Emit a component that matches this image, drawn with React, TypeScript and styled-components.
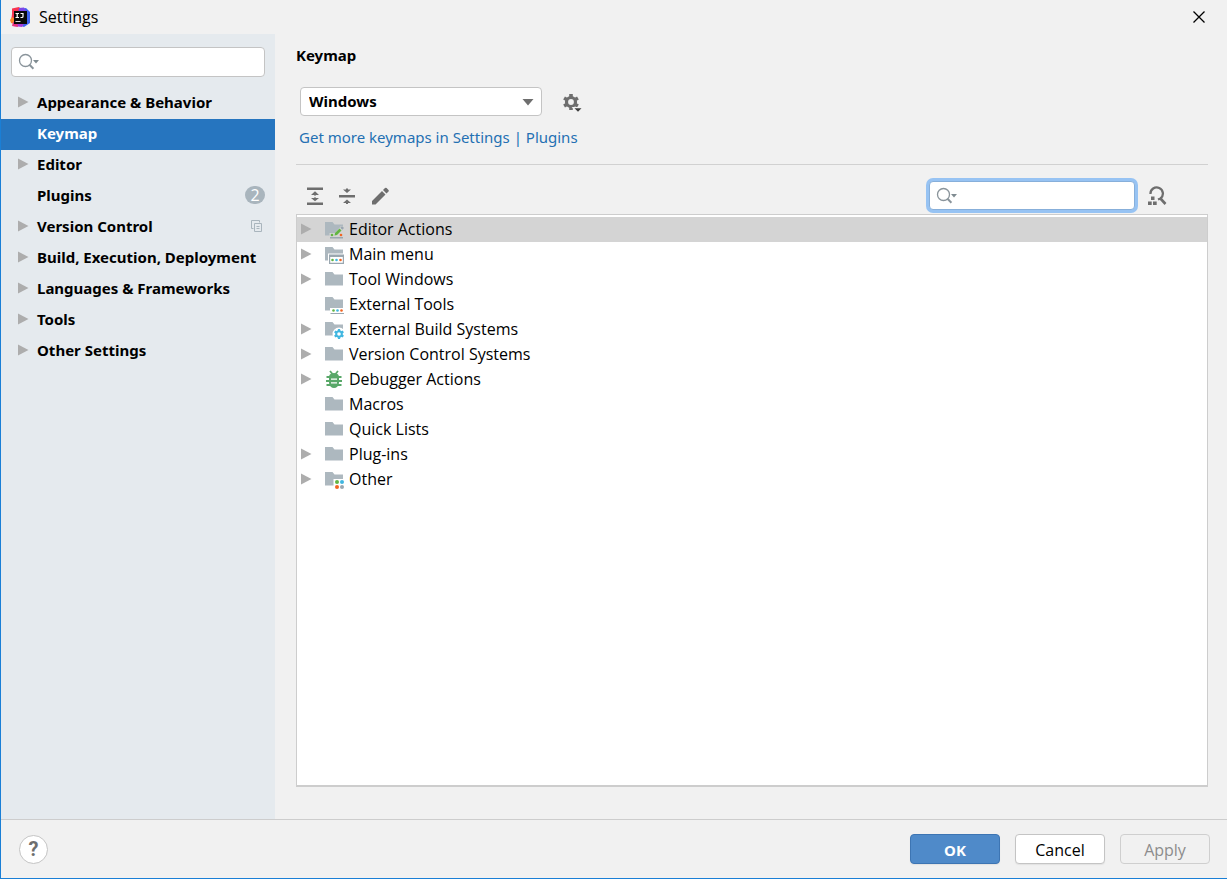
import React from "react";
import styled, { createGlobalStyle, css } from "styled-components";

const GlobalStyle = createGlobalStyle`
  *, *::before, *::after { box-sizing: border-box; }
  body {
    margin: 0;
    background: #f1f1f1;
    color: #000;
    font: 16px/24px "Open Sans", "Noto Sans", sans-serif;
  }
  button, input, select { font: inherit; color: inherit; }
  ul { list-style: none; margin: 0; padding: 0; }
  svg { display: block; flex: none; }
`;

const strongText = css`
  font: 700 15px/24px "Noto Sans", "Open Sans", sans-serif;
`;

const Dialog = styled.div`
  display: flex;
  flex-direction: column;
  min-height: 100vh;
  border: solid #1a7fd6;
  border-width: 0 0 1px 1px;
`;

const TitleBar = styled.header`
  display: flex;
  align-items: center;
  gap: 8px;
  height: 34px;
  padding: 0 21px 0 9px;
`;

const WindowTitle = styled.span`
  flex: 1;
`;

const IconButton = styled.button`
  display: flex;
  padding: 0;
  border: 0;
  background: none;
`;

const Body = styled.div`
  display: flex;
  flex: 1;
`;

const Sidebar = styled.aside`
  flex: none;
  width: 274px;
  padding-top: 13px;
  background: #e5eaee;
`;

const SearchField = styled.label<{ $focused?: boolean }>`
  display: flex;
  align-items: center;
  gap: 4px;
  height: 30px;
  padding: 0 6px;
  border: 1px solid #c4c4c4;
  border-radius: 4px;
  background: #fff;
  ${(p) =>
    p.$focused &&
    css`
      width: 206px;
      height: 29px;
      border-color: #87afda;
      box-shadow: 0 0 0 3px #97c3f3;
    `}
`;

const SearchInput = styled.input`
  flex: 1;
  min-width: 0;
  padding: 0;
  border: 0;
  outline: 0;
  background: none;
`;

const SidebarSearch = styled.div`
  padding: 0 10px 11px;
`;

const NavRow = styled.button<{ $selected?: boolean }>`
  ${strongText}
  display: flex;
  align-items: center;
  gap: 8px;
  width: 100%;
  height: 31px;
  padding: 0 10px 3px 16px;
  border: 0;
  background: ${(p) => (p.$selected ? "#2675bf" : "none")};
  color: ${(p) => (p.$selected ? "#fff" : "#000")};
  text-align: left;
  white-space: nowrap;
`;

const ArrowSlot = styled.span`
  flex: none;
  width: 12px;
`;

const NavLabel = styled.span`
  flex: 1;
`;

const Count = styled.span`
  width: 20px;
  height: 18px;
  border-radius: 9px;
  background: #a9b5bd;
  color: #fff;
  font: 400 16px/18px "Open Sans", sans-serif;
  text-align: center;
`;

const Content = styled.main`
  display: flex;
  flex: 1;
  flex-direction: column;
  min-width: 0;
  padding: 9px 19px 32px 21px;
`;

const Heading = styled.h1`
  ${strongText}
  margin: 0;
`;

const SchemeRow = styled.div`
  display: flex;
  align-items: center;
  gap: 20px;
  padding: 20px 4px 0;
`;

const SelectBox = styled.div`
  position: relative;
  width: 242px;
`;

const Select = styled.select`
  ${strongText}
  display: block;
  width: 100%;
  height: 29px;
  padding: 0 8px 1px;
  border: 1px solid #c4c4c4;
  border-radius: 4px;
  background: #fff;
  appearance: none;
`;

const SelectArrow = styled.svg`
  position: absolute;
  top: 11px;
  right: 8px;
  pointer-events: none;
`;

const PluginsLink = styled.a`
  align-self: flex-start;
  margin: 9px 3px 15px;
  color: #2470b3;
  font: 15px/24px "Noto Sans", "Open Sans", sans-serif;
  text-decoration: none;
`;

const Toolbar = styled.div`
  display: flex;
  align-items: center;
  gap: 12px;
  height: 50px;
  padding: 12px 41px 0 9px;
  border-top: 1px solid #d1d1d1;
`;

const Spacer = styled.span`
  flex: 1;
`;

const Tree = styled.ul`
  flex: 1;
  border: 1px solid #cdcdcd;
  border-bottom-width: 2px;
  background: #fff;

  && {
    padding: 2px 0;
  }
`;

const TreeRow = styled.button<{ $selected?: boolean }>`
  display: flex;
  align-items: center;
  gap: 5px;
  width: 100%;
  height: 25px;
  padding: 0 3px 2px;
  border: 0;
  background: ${(p) => (p.$selected ? "#d4d4d4" : "none")};
  text-align: left;
`;

const TreeArrow = styled(ArrowSlot)`
  width: 19px;
`;

const Footer = styled.footer`
  display: flex;
  align-items: center;
  gap: 15px;
  height: 59px;
  padding: 0 17px 0 18px;
  border-top: 1px solid #cdcdcd;
`;

const HelpButton = styled.button`
  width: 29px;
  height: 29px;
  padding: 0;
  border: 1px solid #c4c4c4;
  border-radius: 50%;
  background: #fff;
  color: #6e6e6e;
  font: 700 20px/26px Roboto, sans-serif;
`;

const DialogButton = styled.button<{ $primary?: boolean }>`
  width: 90px;
  height: 30px;
  padding: 2px 0 0;
  border: 1px solid ${(p) => (p.$primary ? "#3d75b3" : "#c4c4c4")};
  border-radius: 4px;
  background: ${(p) => (p.$primary ? "#4f8ac9" : "#fff")};
  box-shadow: 0 1px 1px #e2e2e2;
  color: ${(p) => (p.$primary ? "#fff" : "#000")};
  ${(p) => p.$primary && strongText}
  &:disabled {
    border-color: #cfcfcf;
    background: #f1f1f1;
    box-shadow: none;
    color: #8c8c8c;
  }
`;

const Logo = () => (
  <svg width="21" height="21" viewBox="0 0 21 21">
    <path d="M2 1.500 9 0 12 3 8 17 2 15 1.500 11 2 7Z" fill="#f9344f" />
    <path d="M0 13 2 10 5 12 5 17 1 16Z" fill="#fb8a2b" />
    <path d="M11 2 16 1 20 5 20 16 14 20 9 18Z" fill="#3d62ee" />
    <path d="M9 1 14 .5 17 5 8 6Z" fill="#7c46e8" />
    <path d="M3 15H15L12 20 3 19Z" fill="#a43bd8" />
    <path d="M3 15H7L8 20 2 19Z" fill="#e8347f" />
    <path d="M4 4H17V17H4Z" fill="#090909" />
    <path d="M5.500 6.500H9M7.200 6.500V10.500M5.500 10.500H9M10.500 6.500H13V9.500Q13 10.500 12 10.500H10.500" fill="none" stroke="#fff" strokeWidth="1.200" />
    <path d="M5.500 14.500H10.500" stroke="#ddd" strokeWidth="1" />
  </svg>
);

const Magnifier = () => (
  <svg width="22" height="18" viewBox="0 0 22 18" fill="none">
    <circle cx="7.500" cy="7.500" r="6" stroke="#8a949b" strokeWidth="1.300" />
    <path d="m11.500 11.800 3.900 3.900" stroke="#8a949b" strokeWidth="2" />
    <path d="M15 7H21L18 10.500Z" fill="#7f8b91" />
  </svg>
);

const Arrow = () => (
  <svg width="12" height="12" viewBox="0 0 12 12">
    <path d="M1 .5V11.500L11.500 6Z" fill="#adadad" />
  </svg>
);

const GearShape = ({ fill }: { fill: string }) => (
  <>
    {[0, 60, 120].map((angle) => (
      <path
        key={angle}
        d="M6.200 0H9.800V3H6.200ZM6.200 13H9.800V16H6.200Z"
        transform={`rotate(${angle} 8 8)`}
        fill={fill}
      />
    ))}
    <circle cx="8" cy="8" r="4.500" fill="none" stroke={fill} strokeWidth="3.200" />
  </>
);

const GearIcon = () => (
  <svg width="20" height="20" viewBox="0 0 20 20">
    <svg x="1" y="2" width="16" height="16" viewBox="0 0 16 16">
      <GearShape fill="#6e6e6e" />
    </svg>
    <path d="M12 16H20L16 20Z" fill="#f1f1f1" stroke="#f1f1f1" strokeWidth="2" />
    <path d="M12.500 16.300H19.500L16 19.800Z" fill="#3c3c3c" />
  </svg>
);

const ExpandAll = () => (
  <svg width="20" height="20" viewBox="0 0 20 20" fill="#6e6e6e">
    <path d="M2 1.500H18V4H2ZM2 16.500H18V19H2ZM10 5.300 14 9H11V9.500H9V9H6ZM10 15.300 14 12H11V11.500H9V12H6Z" />
  </svg>
);

const CollapseAll = () => (
  <svg width="20" height="20" viewBox="0 0 20 20" fill="#6e6e6e">
    <path d="M2 9H18V11.500H2ZM10 7 14 3.500H11V2.500H9V3.500H6ZM10 13.500 14 17H11V18H9V17H6Z" />
  </svg>
);

const Pencil = () => (
  <svg width="20" height="20" viewBox="0 0 20 20" fill="#6e6e6e">
    <path d="M3 15 13 5 16.500 8.500 6.500 18.500H3ZM14 4 16 2Q16.800 1.300 17.600 2L19.500 3.900Q20.200 4.700 19.500 5.500L17.500 7.500Z" />
  </svg>
);

const FindShortcut = () => (
  <svg width="20" height="20" viewBox="0 0 20 20">
    <path d="M3.500 8A6.200 6.200 0 1 1 13.500 12.500L11 13.500" fill="none" stroke="#6e6e6e" strokeWidth="2.300" />
    <path d="m13 12 5.500 6" stroke="#6e6e6e" strokeWidth="2.600" />
    <path d="M4 10.500H7.500V14H4ZM1 15.500H4.700V19H1ZM6 15.500H9.700V19H6Z" fill="#6e6e6e" />
  </svg>
);

const CopyIcon = () => (
  <svg width="15" height="12" viewBox="0 0 15 12" fill="none" stroke="#a9b5bd">
    <path d="M3.500 8.500H1.500V.5H9.500V2.500M4.500 3.500H11.500V11.500H4.500ZM6.500 6.500H9.500M6.500 8.500H9.500" />
  </svg>
);

const CloseIcon = () => (
  <svg width="14" height="14" viewBox="0 0 14 14" stroke="#000" strokeWidth="1.300">
    <path d="M1.500 1.500 12.500 12.500M12.500 1.500 1.500 12.500" />
  </svg>
);

const BugIcon = () => (
  <svg width="20" height="20" viewBox="0 0 20 20">
    <path d="M6 2 8.500 5M14 2 11.500 5M2.500 8H17.500M2 12H18M2.500 16H17.500" stroke="#59a869" strokeWidth="1.800" />
    <path d="M5 7.500Q5.500 4 10 4T15 7.500V14Q14 19 10 19T5 14Z" fill="#59a869" />
    <path d="M7 10.200H13M7 13.800H13" stroke="#fff" strokeWidth="1.300" />
  </svg>
);

const Dots = ({ x, y }: { x: number; y: number }) => (
  <>
    <circle cx={x} cy={y} r="1.300" fill="#62b543" />
    <circle cx={x + 4} cy={y} r="1.300" fill="#40b6e0" />
    <circle cx={x + 8} cy={y} r="1.300" fill="#f26522" />
  </>
);

type Badge = "edit" | "menu" | "tools" | "gear" | "other";

const FolderIcon = ({ badge, backdrop }: { badge?: Badge; backdrop: string }) => (
  <svg width="20" height="20" viewBox="0 0 20 20">
    <path d="M1 3H8.500L10.500 5.500H19V16.500H1Z" fill="#adb8bf" />
    {badge === "edit" && (
      <>
        <path d="M5.500 20V14H11L17 7H20V20Z" fill={backdrop} />
        <path d="M6 18H19V19.500H6Z" fill="#9aa7b0" />
        <path d="M10.500 16.500 11 14 15.500 9.500 17.500 11.500 13 16Z" fill="#62b543" />
        <path d="m16.300 8.800 1.700-1.700 2 2L18.300 10.800Z" fill="#9aa7b0" />
        <circle cx="8" cy="16" r="1.300" fill="#62b543" />
        <circle cx="17" cy="16" r="1.300" fill="#f26522" />
      </>
    )}
    {badge === "menu" && (
      <>
        <path d="M4 9.500H20V20H4Z" fill={backdrop} />
        <path d="M5 10.500H20V20H5ZM6.200 13V18.800H18.800V13Z" fill="#9aa7b0" fillRule="evenodd" />
        <Dots x={8.500} y={16} />
      </>
    )}
    {badge === "tools" && (
      <>
        <path d="M6 14H20V20H6Z" fill={backdrop} />
        <Dots x={9.500} y={16.500} />
        <path d="M6.500 19H20V20H6.500Z" fill="#9aa7b0" />
      </>
    )}
    {badge === "gear" && (
      <>
        <circle cx="15" cy="15" r="6.500" fill={backdrop} />
        <svg x="10" y="10" width="10" height="10" viewBox="0 0 16 16">
          <GearShape fill="#40b6e0" />
        </svg>
      </>
    )}
    {badge === "other" && (
      <>
        <path d="M9.500 10H20V20H9.500Z" fill={backdrop} />
        <circle cx="13" cy="13" r="2" fill="#62b543" />
        <circle cx="18" cy="13" r="2" fill="#40b6e0" />
        <circle cx="13" cy="18" r="2" fill="#f26522" />
        <circle cx="18" cy="18" r="2" fill="#9aa7b0" />
      </>
    )}
  </svg>
);

const pages: { label: string; expandable?: boolean; selected?: boolean; extra?: React.ReactNode }[] = [
  { label: "Appearance & Behavior", expandable: true },
  { label: "Keymap", selected: true },
  { label: "Editor", expandable: true },
  { label: "Plugins", extra: <Count>2</Count> },
  { label: "Version Control", expandable: true, extra: <CopyIcon /> },
  { label: "Build, Execution, Deployment", expandable: true },
  { label: "Languages & Frameworks", expandable: true },
  { label: "Tools", expandable: true },
  { label: "Other Settings", expandable: true },
];

const groups: { label: string; expandable?: boolean; selected?: boolean; badge?: Badge; bug?: boolean }[] = [
  { label: "Editor Actions", expandable: true, selected: true, badge: "edit" },
  { label: "Main menu", expandable: true, badge: "menu" },
  { label: "Tool Windows", expandable: true },
  { label: "External Tools", badge: "tools" },
  { label: "External Build Systems", expandable: true, badge: "gear" },
  { label: "Version Control Systems", expandable: true },
  { label: "Debugger Actions", expandable: true, bug: true },
  { label: "Macros" },
  { label: "Quick Lists" },
  { label: "Plug-ins", expandable: true },
  { label: "Other", expandable: true, badge: "other" },
];

export default function App() {
  return (
    <Dialog>
      <GlobalStyle />
      <TitleBar>
        <Logo />
        <WindowTitle>Settings</WindowTitle>
        <IconButton aria-label="Close">
          <CloseIcon />
        </IconButton>
      </TitleBar>
      <Body>
        <Sidebar>
          <SidebarSearch>
            <SearchField>
              <Magnifier />
              <SearchInput type="text" aria-label="Search settings" />
            </SearchField>
          </SidebarSearch>
          <nav>
            <ul>
              {pages.map((page) => (
                <li key={page.label}>
                  <NavRow $selected={page.selected}>
                    <ArrowSlot>{page.expandable && <Arrow />}</ArrowSlot>
                    <NavLabel>{page.label}</NavLabel>
                    {page.extra}
                  </NavRow>
                </li>
              ))}
            </ul>
          </nav>
        </Sidebar>
        <Content>
          <Heading>Keymap</Heading>
          <SchemeRow>
            <SelectBox>
              <Select aria-label="Keymap scheme" defaultValue="Windows">
                <option>Windows</option>
              </Select>
              <SelectArrow width="12" height="8" viewBox="0 0 12 8">
                <path d="M.5 1H11.500L6 7.500Z" fill="#6e6e6e" />
              </SelectArrow>
            </SelectBox>
            <IconButton aria-label="Scheme actions">
              <GearIcon />
            </IconButton>
          </SchemeRow>
          <PluginsLink href="#plugins">Get more keymaps in Settings | Plugins</PluginsLink>
          <Toolbar>
            <IconButton aria-label="Expand all">
              <ExpandAll />
            </IconButton>
            <IconButton aria-label="Collapse all">
              <CollapseAll />
            </IconButton>
            <IconButton aria-label="Edit shortcut">
              <Pencil />
            </IconButton>
            <Spacer />
            <SearchField $focused>
              <Magnifier />
              <SearchInput type="text" aria-label="Search actions" />
            </SearchField>
            <IconButton aria-label="Find actions by shortcut">
              <FindShortcut />
            </IconButton>
          </Toolbar>
          <Tree>
            {groups.map((group) => (
              <li key={group.label}>
                <TreeRow $selected={group.selected}>
                  <TreeArrow>{group.expandable && <Arrow />}</TreeArrow>
                  {group.bug ? (
                    <BugIcon />
                  ) : (
                    <FolderIcon badge={group.badge} backdrop={group.selected ? "#d4d4d4" : "#fff"} />
                  )}
                  {group.label}
                </TreeRow>
              </li>
            ))}
          </Tree>
        </Content>
      </Body>
      <Footer>
        <HelpButton aria-label="Help">?</HelpButton>
        <Spacer />
        <DialogButton $primary>OK</DialogButton>
        <DialogButton>Cancel</DialogButton>
        <DialogButton disabled>Apply</DialogButton>
      </Footer>
    </Dialog>
  );
}
